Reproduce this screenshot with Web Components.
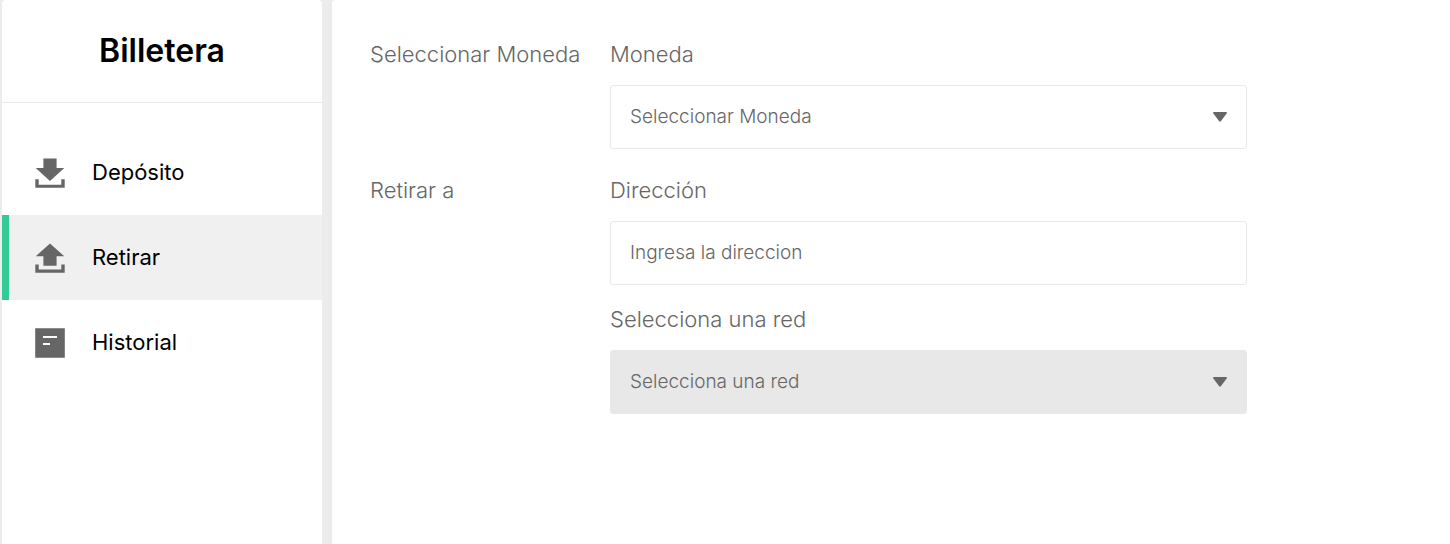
<!DOCTYPE html>
<html lang="es">
<head>
<meta charset="utf-8">
<meta name="viewport" content="width=device-width, initial-scale=1">
<title>Billetera</title>
<style>
  body { margin: 0; background: #ececec; color: #000; font-family: Inter, "Liberation Sans", sans-serif; }
</style>
</head>
<body>
<wallet-page>
  <wallet-sidebar slot="sidebar" heading="Billetera">
    <wallet-nav-item href="#deposito" icon="deposit">Depósito</wallet-nav-item>
    <wallet-nav-item href="#retirar" icon="withdraw" active>Retirar</wallet-nav-item>
    <wallet-nav-item href="#historial" icon="history">Historial</wallet-nav-item>
  </wallet-sidebar>
  <form-section heading="Seleccionar Moneda">
    <wallet-field kind="select" label="Moneda" hint="Seleccionar Moneda"></wallet-field>
  </form-section>
  <form-section heading="Retirar a">
    <wallet-field kind="text" label="Dirección" hint="Ingresa la direccion"></wallet-field>
    <wallet-field kind="select" label="Selecciona una red" hint="Selecciona una red" disabled></wallet-field>
  </form-section>
</wallet-page>

<script>
const mount = (host, html) => { host.attachShadow({ mode: 'open' }).innerHTML = html; };

customElements.define('wallet-page', class extends HTMLElement {
  connectedCallback() {
    mount(this, `
      <style>
        :host { display: grid; grid-template-columns: 320px minmax(0, 1fr); gap: 10px; min-height: 100vh; padding-left: 2px; box-sizing: border-box; }
        main { background: #fff; border-radius: 4px 0 0 0; padding: 38px; display: flex; flex-direction: column; gap: 25px; }
      </style>
      <slot name="sidebar"></slot>
      <main><slot></slot></main>`);
  }
});

customElements.define('wallet-sidebar', class extends HTMLElement {
  connectedCallback() {
    mount(this, `
      <style>
        :host { display: block; background: #fff; border-radius: 4px 4px 0 0; }
        h1 { margin: 0; padding: 31px 0; border-bottom: 1px solid #e8e8e8; text-align: center; font-size: 32px; line-height: 40px; font-weight: 600; }
        nav { padding-top: 27px; }
      </style>
      <h1>${this.getAttribute('heading')}</h1>
      <nav><slot></slot></nav>`);
  }
});

const ICONS = {
  deposit: '<path d="M8.400 .4H21.600V10H29.300L15 23L.7 10H8.400ZM.3 21.200H3.700V26.700H26.300V21.200H29.700V29.700H.3Z"/>',
  withdraw: '<path d="M15 .6L29.300 13.300H21.600V22.700H8.400V13.300H.7ZM.3 21.500H3.700V26.500H26.300V21.500H29.700V29.700H.3Z"/>',
  history: '<path fill-rule="evenodd" d="M.2 .2H29.800V29.800H.2ZM8 8V10H22V8ZM8 15V17H15V15Z"/>'
};

customElements.define('wallet-nav-item', class extends HTMLElement {
  connectedCallback() {
    mount(this, `
      <style>
        :host { display: block; }
        a { display: flex; align-items: center; gap: 27px; height: 85px; padding-left: 26px; border-left: 7px solid transparent; box-sizing: border-box; color: #000; text-decoration: none; font-size: 22px; line-height: 32px; }
        :host([active]) a { background: #f0f0f0; border-color: #32cb96; }
        svg { width: 30px; height: 30px; fill: #666; }
        span { padding-bottom: 2px; }
      </style>
      <a href="${this.getAttribute('href')}"${this.hasAttribute('active') ? ' aria-current="page"' : ''}>
        <svg viewBox="0 0 30 30" aria-hidden="true">${ICONS[this.getAttribute('icon')]}</svg>
        <span><slot></slot></span>
      </a>`);
  }
});

customElements.define('form-section', class extends HTMLElement {
  connectedCallback() {
    mount(this, `
      <style>
        :host { display: grid; grid-template-columns: 240px minmax(0, 637px); color: #666; }
        h2 { margin: 0; font-size: 22px; line-height: 32px; font-weight: 350; }
        div { display: flex; flex-direction: column; gap: 18px; }
      </style>
      <h2>${this.getAttribute('heading')}</h2>
      <div><slot></slot></div>`);
  }
});

customElements.define('wallet-field', class extends HTMLElement {
  connectedCallback() {
    const hint = this.getAttribute('hint');
    const off = this.hasAttribute('disabled') ? ' disabled' : '';
    const control = this.getAttribute('kind') === 'select'
      ? `<select id="control"${off}><option>${hint}</option></select>
         <svg viewBox="0 0 14 10" aria-hidden="true"><path d="M1 0H13Q14 0 14 1L8 9Q7 10.400 6 9L0 1Q0 0 1 0Z"/></svg>`
      : `<input id="control" type="text" placeholder="${hint}">`;
    mount(this, `
      <style>
        :host { display: flex; flex-direction: column; gap: 15px; color: #666; }
        label { font-size: 22px; line-height: 32px; font-weight: 350; }
        .box { display: grid; align-items: center; }
        select, input { grid-area: 1 / 1; appearance: none; width: 100%; height: 64px; box-sizing: border-box; margin: 0; padding: 0 19px 2px; border: 1px solid #e8e8e8; border-radius: 3px; background: #fff; color: #666; font-family: inherit; font-size: 19px; font-weight: 350; opacity: 1; }
        select:disabled { background: #e8e8e8; }
        input::placeholder { color: #666; opacity: 1; }
        svg { grid-area: 1 / 1; justify-self: end; width: 14px; height: 10px; margin-right: 20px; fill: #666; pointer-events: none; }
      </style>
      <label for="control">${this.getAttribute('label')}</label>
      <div class="box">${control}</div>`);
  }
});
</script>
</body>
</html>
